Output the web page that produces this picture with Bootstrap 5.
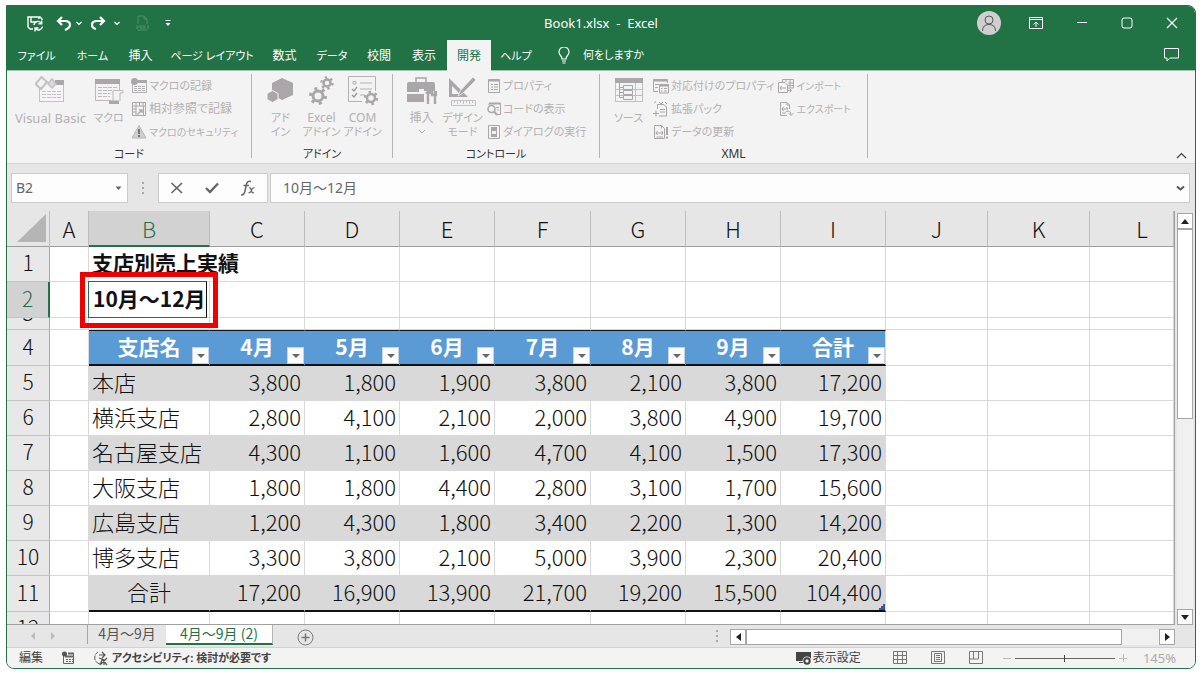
<!DOCTYPE html>
<html lang="ja">
<head>
<meta charset="utf-8">
<meta name="viewport" content="width=device-width, initial-scale=1">
<title>Book1.xlsx - Excel</title>
<link href="https://cdn.jsdelivr.net/npm/bootstrap@5.3.0/dist/css/bootstrap.min.css" rel="stylesheet">
<style>
:root{--green:#217346;--dim:#b3b0b2;--line:#d9d9d9;--chrome:#e6e6e6}
body{height:100vh;padding:5px 7px 7px 6px;background:#fff;font-family:"Noto Sans","Noto Sans CJK JP",sans-serif;font-size:12px;line-height:16px;color:#333;font-feature-settings:"palt";overflow:hidden}
svg{display:block;flex:none}
button{background:none;border:0;padding:0;color:inherit;font:inherit}
input{font:inherit;color:inherit;border:0;outline:0;background:none;min-width:0}
.app-window{height:100%;border:1px solid var(--green);border-radius:0 8px 8px 8px;background:var(--chrome);overflow:hidden}
.title-bar{height:34px;background:var(--green);color:#fff}
.title-bar .tools,.title-bar .win{flex:1 1 0}
.title-bar .win{gap:32px}
.title-text{white-space:pre;font-size:13px}
.tab-bar{height:31px;background:var(--green);color:#fff;border-bottom:1px solid #a5c3b1}
.tab-grid{display:grid;grid-template-columns:59px 53px 43px 100px 45px 50px 44px 46px 44px 50px}
.tab-grid a{color:#fff;text-decoration:none;text-align:center;line-height:31px;white-space:nowrap;height:31px}
.tab-grid a.current{background:#f3f3f3;color:var(--green)}
.avatar{width:24px;height:24px;border-radius:50%;background:#d0cfcf}
.ribbon{height:93px;background:#f3f3f3;border-bottom:1px solid #d2d2d2;color:var(--dim)}
.ribbon-group{margin:3px 0 5px;border-right:1px solid #b5b5b5;display:flex;flex-direction:column;flex:none}
.ribbon-group .tools-row{height:70px;display:flex;flex:none}
.group-name{color:#333;text-align:center;line-height:16px;margin-top:2px}
.g-code{width:245px}.g-addin{width:141px}.g-ctl{width:207px}.g-xml{width:268px}
.big{display:flex;flex-direction:column;align-items:center;width:41px;white-space:nowrap;line-height:14px;padding-top:2px}
.big svg{margin-bottom:5px}
.big.one-line{line-height:18px}
.big.wide{width:79px;font-size:13px}
.big.medium{width:37px}
.small-list{display:flex;flex-direction:column}
.small-list button{height:23px;display:flex;align-items:center;gap:2px;white-space:nowrap}
.kana{font-size:11px}
.kana-s{font-size:10px}
.formula-row{height:47px;padding:9px 5px 8px 4px}
.box{background:#fdfdfd;border:1px solid #cacaca;color:#666;height:30px}
.name-box{width:117px;font-size:14px}
.fx-box{width:110px}
.formula-box{margin-left:2px;font-size:14px}
.sheet-wrap{min-height:0;flex:1 1 0}
.grid-area{overflow:hidden;border-right:1px solid #a0a0a0;border-bottom:1px solid #a0a0a0;background:#fff;min-width:0}
.sheet{table-layout:fixed;width:100%;border-collapse:separate;border-spacing:0;font-family:"Noto Sans CJK JP",sans-serif;font-weight:300;font-size:22px;line-height:22px;color:#111;font-feature-settings:normal}
.sheet td,.sheet th{padding:0 3px 4px;border-right:1px solid var(--line);border-bottom:1px solid var(--line);height:35px;font-weight:300;white-space:nowrap;vertical-align:middle}
.sheet .tall td,.sheet .tall th{height:36px}
.sheet thead th{height:36px;text-align:center;background:var(--chrome);border-bottom:1px solid #9c9c9c;border-right:1px solid #bdbdbd;padding-bottom:2px}
.sheet thead .sel{background:#d2d2d2;color:var(--green);border-bottom:2px solid var(--green);padding-bottom:1px}
.sheet tbody th{text-align:center;background:#e8e8e8;border-right:1px solid #a8a8a8;border-bottom-color:#c4c4c4;padding:0 0 4px;font-size:21px}
.sheet tbody th.sel{background:#d2d2d2;color:var(--green);border-right:2px solid var(--green)}
.sheet .short td,.sheet .short th{height:12px;line-height:11px;padding:0}
.sheet .clip{height:11px;overflow:hidden;display:flex;justify-content:center;align-items:flex-end;line-height:22px;padding-bottom:6px}
.sheet .n{text-align:right}
.sheet .band .d{background:#d9d9d9;border-color:#d9d9d9}
.sheet .caption-row td{font-weight:700;font-size:21px;overflow:visible}
.sheet .flt td.d{background:#5b9bd5;border-right-color:#5b9bd5;border-top:1px solid #111;border-bottom:2px solid #111;color:#fff;font-weight:700;font-size:21px;text-align:center;position:relative}
.sheet .flt td.d.edge,.sheet .band td.edge{border-right-color:var(--line)}
.sheet .last td.d{border-bottom:2px solid #111;position:relative}
.flt button{position:absolute;right:0;bottom:0;width:17px;height:17px;background:#fbfbfb;border:1px solid #c9d3de;display:flex;align-items:center;justify-content:center}
.flt button::after{content:"";border:4px solid transparent;border-top-color:#666;border-bottom:0}
.handle{position:absolute;right:0;bottom:0}
.editing{position:relative}
.editing input{position:absolute;left:-1px;top:-1px;width:119px;height:37px;border:1px solid var(--green);border-right-color:#111;background:#fff;font-weight:700;font-size:21px;padding:0 0 3px 4px}
.callout-frame{position:absolute;left:-9px;top:-10px;width:138px;height:56px;border:5px solid #f00000;pointer-events:none;z-index:2}
.v-scroll{width:16px;margin:2px 2px 0 2px;background:#f0f0f0}
.sbtn{width:16px;height:16px;border:1px solid #a6a6a6;background:#fff;display:flex;align-items:center;justify-content:center;flex:none}
.v-thumb{flex:0 0 46%;border:1px solid #a6a6a6;background:#fff}
.sheet-tabs{height:22px;font-size:14px}
.sheet-tabs a{text-decoration:none;color:#555;white-space:nowrap;text-align:center;line-height:16px;font-family:"Noto Sans CJK JP",sans-serif}
.sheet-tabs a.current{background:#fff;color:var(--green);border-bottom:2px solid var(--green);border-right:1px solid #b5b5b5;width:107px;height:20px}
.sheet-tabs a.other{width:79px;border-left:1px solid #a6a6a6;height:19px}
.h-scroll{flex:0 0 445px;background:#f0f0f0;height:16px}
.h-thumb{flex:0 0 376px;border:1px solid #a6a6a6;background:#fff}
.status{height:21px;background:#f3f3f3;border-top:1px solid #d2d2d2;color:#444;padding:0 19px 0 12px}
.zoom-range{width:100px;height:14px;appearance:none;background:linear-gradient(#666,#666) center/100% 1px no-repeat}
.zoom-range::-webkit-slider-thumb{appearance:none;width:1px;height:7px;background:#444}
.zoom-text{color:#aaa;font-size:13px}
</style>
</head>
<body>
<div class="app-window d-flex flex-column">
  <header class="title-bar d-flex align-items-center flex-shrink-0">
    <div class="tools d-flex align-items-center">
      <button aria-label="保存" class="ms-3"><svg class="ms-1" width="17" height="17" viewBox="0 0 17 17" fill="none" stroke="#fff" stroke-width="1.4"><path d="M6 14H3L1 12V2H13L15 4V5M4 2V7H9M12 2V4"/><path d="M7 10A4 4 0 0 1 14.500 8.500M14.700 5.500V8.800H11.500M15.500 11.500A4 4 0 0 1 8.500 13.500M8 16.500V13H11.500"/></svg></button>
      <button aria-label="元に戻す" class="ms-2"><svg class="ms-1" width="16" height="16" viewBox="1 0 16 16" fill="none" stroke="#fff" stroke-width="2.200"><path d="M7 2L3 6L7 10M3 6H10Q15 6 15 10Q15 13 10 15"/></svg></button>
      <svg class="ms-1" width="6" height="5" viewBox="0 0 6 5" fill="none" stroke="#fff" stroke-width="1.200"><path d="M0.500 1L3 3.500L5.500 1"/></svg>
      <button aria-label="やり直し" class="ms-2"><svg width="16" height="16" viewBox="1 0 16 16" fill="none" stroke="#fff" stroke-width="2.200"><path d="M11 2L15 6L11 10M15 6H8Q3 6 3 10Q3 13 7 14"/></svg></button>
      <svg class="ms-2" width="6" height="5" viewBox="0 0 6 5" fill="none" stroke="#fff" stroke-width="1.200"><path d="M0.500 1L3 3.500L5.500 1"/></svg>
      <svg class="ms-3" width="13" height="16" viewBox="0 0 13 16" fill="none" stroke="#4d9068"><path d="M2 9V1H8L11 4V9M8 1V4H11M2 14V15H11V14M0 11H2V13H0M4 10V13H9V10M5 11H8M11 11H13V13H11"/></svg>
      <svg class="ms-3" width="6" height="6" viewBox="0 0 6 6" fill="#fff"><path d="M0.500 0H5.500V1H0.500ZM0.500 3H5.500L3 6Z"/></svg>
    </div>
    <div class="title-text">Book1.xlsx  -  Excel</div>
    <div class="win d-flex align-items-center justify-content-end">
      <button class="avatar d-flex align-items-center justify-content-center me-1" aria-label="アカウント"><svg width="16" height="17" viewBox="0 0 16 17" fill="none" stroke="#555"><circle cx="8" cy="5" r="4"/><path d="M1.500 16Q1.500 9.500 8 9.500T14.500 16"/></svg></button>
      <button aria-label="リボンの表示オプション" style="margin-left:-8px"><svg width="14" height="12" viewBox="0 0 14 12" fill="none" stroke="#fff"><path d="M0.500 0.500H13.500V11.500H0.500ZM0.500 2.500H13.500M7 10V5M4.500 7.500L7 5L9.500 7.500"/></svg></button>
      <button aria-label="最小化"><svg width="14" height="12" viewBox="0 0 14 12"><path d="M2 5.500H12" stroke="#fff"/></svg></button>
      <button aria-label="最大化"><svg width="12" height="12" viewBox="0 0 12 12"><rect x="1" y="1" width="10" height="10" rx="2" fill="none" stroke="#fff"/></svg></button>
      <button class="pe-3" aria-label="閉じる"><svg width="14" height="12" viewBox="-1 0 14 12"><path d="M1 1L11 11M11 1L1 11" stroke="#fff" stroke-width="1.200"/></svg></button>
    </div>
  </header>
  <nav class="tab-bar d-flex align-items-center flex-shrink-0">
    <div class="tab-grid"><a href="#" class="kana">ファイル</a><a href="#" class="kana">ホーム</a><a href="#">挿入</a><a href="#" class="kana">ページ レイアウト</a><a href="#">数式</a><a href="#" class="kana">データ</a><a href="#">校閲</a><a href="#">表示</a><a href="#" class="current">開発</a><a href="#" class="kana">ヘルプ</a></div>
    <button class="d-flex align-items-center gap-2 ms-3 kana"><svg width="14" height="17" viewBox="0 0 14 17" fill="none" stroke="#fff" stroke-width="1.200"><path d="M5 12Q5 10 3.500 8.500A5 5 0 1 1 10.500 8.500Q9 10 9 12ZM5 14H9M5.500 16H8.500"/></svg><span class="ms-1">何をしますか</span></button>
    <button class="ms-auto pe-3" aria-label="コメント"><svg width="15" height="14" viewBox="0 0 15 14" fill="none" stroke="#fff"><path d="M0.500 0.500H14.500V10H6L3 13V10H0.500Z"/></svg></button>
  </nav>
  <section class="ribbon d-flex flex-shrink-0">
    <div class="ribbon-group g-code">
      <div class="tools-row ps-1">
        <button class="big one-line wide"><svg width="32" height="28" viewBox="0 0 32 28" fill="none" stroke="#c5c0c4"><rect x="4.500" y="6.500" width="24" height="19" fill="#f7f5f7"/><path d="M7 15.500H26M7 18.500H26M7 21.500H26" stroke-dasharray="4 1"/><path d="M20 4H29V9H20Z" fill="#aaa6a9" stroke="none"/><path d="M6.500 1L12 6L6 13L0.500 8Z" fill="#f3f3f3" stroke-width="2"/><path d="M17 3L21 8L17 12L13 8Z" fill="#ddd9dc" stroke-width="1.500"/></svg>Visual Basic</button>
        <button class="big one-line medium"><svg width="30" height="28" viewBox="0 0 30 28" fill="none" stroke="#bdb8bc"><path d="M17 24.500H1.500V3.500H25.500V14"/><path d="M1 3H26V8H1Z" fill="#aaa6a9" stroke="none"/><path d="M4 11.500H24M4 14.500H18M4 17.500H16M4 20.500H16" stroke-dasharray="4 1"/><path d="M19 25V14.500H29V17H26V25" fill="#f3f3f3"/><path d="M15 24.500H25V28H15Z" fill="#aaa6a9" stroke="none"/></svg><span class="kana">マクロ</span></button>
        <div class="small-list ms-1">
          <button><svg width="16" height="16" viewBox="0 0 16 16" fill="none" stroke="#b5b0b4"><rect x="1.500" y="3.500" width="14" height="11"/><path d="M7 2H16V5H7Z" fill="#aaa6a9" stroke="none"/><path d="M3 8.500H14M3 10.500H14M3 12.500H14" stroke-dasharray="3 1"/><circle cx="3.500" cy="3.500" r="3.500" fill="#aaa6a9" stroke="none"/></svg><span class="kana">マクロの記録</span></button>
          <button><svg width="16" height="16" viewBox="0 0 16 16" fill="none" stroke="#aaa6a9"><path d="M1.500 1.500H14.500V14.500H1.500ZM1.500 5H14.500M5 1.500V14.500M8.500 1.500V5M12 1.500V5M1.500 8H5M1.500 11H5M12.500 5V14"/><path d="M6.500 13.500L11 9M11 12V9H8" stroke-width="1.400"/></svg>相対参照で記録</button>
          <button><svg width="16" height="16" viewBox="0 0 16 16"><path d="M8 1.500L15 14H1Z" fill="#d2cdd1" stroke="#bbb6ba"/><path d="M7 5H9V10H7ZM7 11H9V13H7Z" fill="#777"/></svg><span class="kana-s">マクロのセキュリティ</span></button>
        </div>
      </div>
      <div class="group-name kana">コード</div>
    </div>
    <div class="ribbon-group g-addin">
      <div class="tools-row ps-1">
        <button class="big ms-1"><svg width="28" height="30" viewBox="0 0 28 30"><path d="M15 2L26 7V19L15 24L5 19V7Z" fill="#aaa6a9"/><path d="M5.500 14.500L11 17.500V23.500L5.500 26.500L0 23.500V17.500Z" fill="#aaa6a9" stroke="#f3f3f3"/></svg><span class="kana">アド<br>イン</span></button>
        <button class="big"><svg width="28" height="30" viewBox="0 0 28 30" fill="none" stroke="#aaa6a9"><circle cx="10" cy="20" r="5" stroke-width="3"/><circle cx="10" cy="20" r="7.500" stroke-width="3" stroke-dasharray="3 4.850"/><circle cx="19" cy="7" r="3.500" stroke-width="2.500"/><circle cx="19" cy="7" r="5.500" stroke-width="2.500" stroke-dasharray="2.300 3.460"/></svg>Excel<br><span class="kana">アドイン</span></button>
        <button class="big"><svg width="30" height="30" viewBox="0 0 30 30" fill="none" stroke="#b5b0b4"><path d="M14 25.500H0.500V0.500H27.500V15M5 5.500H8V8H5ZM12 7H24M12 13H24M12 19H17"/><path d="M4 13L6 15L9 11M4 19L6 21L9 17" stroke="#999" stroke-width="1.300"/><circle cx="23" cy="22" r="4" stroke-width="2.500" stroke="#aaa6a9"/><circle cx="23" cy="22" r="6" stroke-width="2.500" stroke="#aaa6a9" stroke-dasharray="2.500 3.780"/></svg>COM<br><span class="kana">アドイン</span></button>
      </div>
      <div class="group-name kana">アドイン</div>
    </div>
    <div class="ribbon-group g-ctl">
      <div class="tools-row ps-1">
        <button class="big ms-1"><svg width="30" height="30" viewBox="0 0 30 30"><path d="M0 8Q0 6 2 6H26Q28 6 28 8V15H24V18H20V15H17V13H12V16H0ZM0 18H17V26H0Z" fill="#aaa6a9"/><path d="M9 6V2H19V6" fill="none" stroke="#aaa6a9" stroke-width="1.500"/><path d="M19 16L21 18V28M28 15V28M25 15V19H30V15" fill="none" stroke="#aaa6a9" stroke-width="2.400"/></svg><span>挿入</span><svg class="mt-1" width="8" height="5" viewBox="0 0 8 5" fill="none" stroke="#aaa"><path d="M1 1L4 4L7 1"/></svg></button>
        <button class="big"><svg width="30" height="30" viewBox="0 0 30 30"><path d="M1 2V21H20ZM4 10L12 18H4Z" fill="#aaa6a9" fill-rule="evenodd"/><path d="M10 20L12 15L25 1L28 4L15 17Z" fill="#aaa6a9" stroke="#f3f3f3" stroke-width=".7"/><path d="M3.500 24.500H27.500V29.500H3.500ZM6.500 25V27M9.500 25V28M12.500 25V27M15.500 25V28M18.500 25V27M21.500 25V28M24.500 25V27" fill="none" stroke="#c9bfc7"/></svg><span class="kana">デザイン<br>モード</span></button>
        <div class="small-list ms-1">
          <button><svg width="14" height="16" viewBox="0 0 14 16" fill="none" stroke="#aaa6a9"><path d="M1.500 1.500H12.500V14.500H1.500Z"/><path d="M1.500 2.500H12.500" stroke-width="2"/><path d="M4 6.500H6M7 6.500H11M4 9H6M7 9H11M4 11.500H6M7 11.500H11"/></svg><span class="kana">プロパティ</span></button>
          <button><svg width="14" height="16" viewBox="0 0 14 16" fill="none" stroke="#aaa6a9"><path d="M2 4V2.500H13.500V13.500H9"/><path d="M2 2.500H13.500" stroke-width="2"/><path d="M9 6.500H12M10 9H12"/><circle cx="4.500" cy="8" r="3.500" stroke-width="1.500"/><path d="M7 10.500L10 14" stroke-width="2"/></svg><span class="kana">コードの表示</span></button>
          <button><svg width="14" height="16" viewBox="0 0 14 16" fill="none" stroke="#aaa6a9"><path d="M1.500 1.500H12.500V14.500H1.500Z"/><path d="M4 3H10V13H4Z" fill="#aaa6a9" stroke="none"/><path d="M5 7H9V10H5Z" fill="#f3f3f3" stroke="none"/></svg><span class="kana">ダイアログの実行</span></button>
        </div>
      </div>
      <div class="group-name kana">コントロール</div>
    </div>
    <div class="ribbon-group g-xml">
      <div class="tools-row ps-1">
        <button class="big one-line ms-1"><svg width="28" height="28" viewBox="0 0 28 28" fill="none" stroke="#c5bbc2"><path d="M0.500 2.500H27.500V25.500H0.500ZM0.500 19.500H27.500M0.500 13.500H27.500M20.500 6V25"/><path d="M0 2H28V7H0Z" fill="#aaa6a9" stroke="none"/><path d="M4.500 7V21.500H8M4.500 11.500H8M4.500 16.500H8M8.500 9.500H17.500V13.500H8.500ZM8.500 14.500H17.500V18.500H8.500ZM8.500 19.500H17.500V23.500H8.500Z" stroke="#aaa6a9"/></svg><span class="kana">ソース</span></button>
        <div class="small-list ms-1">
          <button><svg width="16" height="16" viewBox="0 0 16 16" fill="none" stroke="#aaa6a9"><path d="M5 13.500H0.500V1.500H14.500V5"/><path d="M0.500 2.500H14.500" stroke-width="2"/><path d="M2 6.500H6M2 9.500H5M6.500 6.500H15.500V15H6.500ZM8 10.500H9.500M11 10.500H14M8 13H9.500M11 13H14"/><path d="M6.500 7.500H15.500" stroke-width="2"/></svg><span class="kana">対応付けのプロパティ</span></button>
          <button><svg width="16" height="16" viewBox="0 0 16 16" fill="none" stroke="#aaa6a9"><path d="M4.500 8V3.500H11L13.500 6V15H6M1 2L3 0.500M6 1L8 3L10 1M12 1L14 3M7 8.500H12M7 11H12M0 12.500H6M3 9.500V15.500"/></svg><span class="kana">拡張パック</span></button>
          <button><svg width="16" height="16" viewBox="0 0 16 16" fill="none" stroke="#aaa6a9"><path d="M1.500 1.500H8.500L11.500 4.500V14.500H1.500ZM8.500 1.500V4.500M3 9H10M4.500 7L3 9L4.500 11M8.500 7L10 9L8.500 11M3.500 13H10"/><path d="M14 3V11M14 12.500V14.500" stroke-width="2"/></svg><span class="kana">データの更新</span></button>
        </div>
        <div class="small-list ms-1">
          <button><svg width="16" height="16" viewBox="0 0 16 16" fill="none" stroke="#aaa6a9"><path d="M4.500 4V1.500H15.500V10H10M8 1.500V4M12 1.500V10M10 5H15.500M10 7.500H15.500M0.500 4.500H7L9.500 7V14.500H0.500ZM2 10H8M3.500 8L2 10L3.500 12M9 12.500H13.500M11.500 10.500L13.500 12.500L11.500 14.500"/></svg><span class="kana-s">インポート</span></button>
          <button><svg width="16" height="16" viewBox="0 0 16 16" fill="none" stroke="#aaa6a9"><path d="M9 14.500H2.500V1.500H9L11.500 4V8M9 1.500V4H11.500M4 8H10M5.500 6L4 8L5.500 10M8.500 6L10 8M4 12H8M8 10.500Q13 9 13 14M10.500 12L13 14.500L15.500 12"/></svg><span class="kana-s">エクスポート</span></button>
        </div>
      </div>
      <div class="group-name">XML</div>
    </div>
    <button class="ms-auto mt-auto me-2 mb-1" aria-label="リボンを折りたたむ"><svg width="11" height="7" viewBox="0 0 11 7" fill="none" stroke="#444" stroke-width="1.200"><path d="M1 6L5.500 1.500L10 6"/></svg></button>
  </section>
  <div class="formula-row d-flex align-items-center flex-shrink-0">
    <div class="box name-box d-flex align-items-center flex-shrink-0"><input class="flex-grow-1 w-50 ps-1" value="B2" aria-label="名前ボックス"><svg class="me-1" width="9" height="5" viewBox="0 0 9 5"><path d="M1.500 0.500H7.500L4.500 4Z" fill="#666"/></svg></div>
    <svg class="mx-2" width="14" height="16" viewBox="0 0 14 16" fill="#aaa"><path d="M6 2H8V4H6ZM6 7H8V9H6ZM6 12H8V14H6Z"/></svg>
    <div class="box fx-box d-flex align-items-center justify-content-around flex-shrink-0">
      <button aria-label="キャンセル"><svg width="14" height="12" viewBox="0 0 14 12"><path d="M1.500 1L12 11M12 1L1.500 11" stroke="#666" stroke-width="1.700"/></svg></button>
      <button aria-label="入力"><svg width="14" height="12" viewBox="0 0 14 12"><path d="M1 6L5 10L13 1.500" fill="none" stroke="#666" stroke-width="2.400"/></svg></button>
      <button aria-label="関数の挿入"><svg width="16" height="16" viewBox="0 0 16 16" fill="none" stroke="#666"><path d="M1 15Q4 15.500 5 11L6.500 4Q7.500 0.500 11 1.500M3.500 5.500H9" stroke-width="1.500"/><path d="M9 8Q11 7 11.500 11Q12 13.500 14 12.500M14.500 8Q13 7 11.500 10.500Q10 13.500 8.500 12.500" stroke-width="1.200"/></svg></button>
    </div>
    <div class="box formula-box d-flex align-items-center flex-grow-1"><input class="flex-grow-1 ps-2 ms-1" value="10月～12月" aria-label="数式バー"><svg class="me-1" width="9" height="7" viewBox="0 0 9 7" fill="none" stroke="#555" stroke-width="2"><path d="M1 1.500L4.500 4.500L8 1.500"/></svg></div>
  </div>
  <main class="sheet-wrap d-flex">
    <div class="grid-area flex-grow-1">
      <table class="sheet">
        <colgroup><col style="width:43px"><col style="width:39px"><col style="width:121px"><col style="width:95px"><col style="width:95px"><col style="width:95px"><col style="width:96px"><col style="width:95px"><col style="width:95px"><col style="width:105px"><col style="width:102px"><col style="width:102px"><col></colgroup>
        <thead><tr><th aria-label="すべて選択"><svg class="ms-auto" width="30" height="30" viewBox="0 0 30 30"><path d="M30 1V29H1Z" fill="#b5b5b5"/></svg></th><th>A</th><th class="sel">B</th><th>C</th><th>D</th><th>E</th><th>F</th><th>G</th><th>H</th><th>I</th><th>J</th><th>K</th><th class="ps-4">L</th></tr></thead>
        <tbody>
        <tr class="caption-row"><th>1</th><td></td><td class="border-end-0">支店別売上実績</td><td></td><td></td><td></td><td></td><td></td><td></td><td></td><td></td><td></td><td></td></tr>
        <tr class="tall"><th class="sel">2</th><td></td><td class="editing"><input value="10月～12月" aria-label="セル B2"><span class="callout-frame"></span></td><td></td><td></td><td></td><td></td><td></td><td></td><td></td><td></td><td></td><td></td></tr>
        <tr class="short"><th><div class="clip">3</div></th><td></td><td></td><td></td><td></td><td></td><td></td><td></td><td></td><td></td><td></td><td></td><td></td></tr>
        <tr class="flt tall"><th>4</th><td></td><td class="d">支店名<button aria-label="支店名で絞り込み"></button></td><td class="d">4月<button aria-label="4月で絞り込み"></button></td><td class="d">5月<button aria-label="5月で絞り込み"></button></td><td class="d">6月<button aria-label="6月で絞り込み"></button></td><td class="d">7月<button aria-label="7月で絞り込み"></button></td><td class="d">8月<button aria-label="8月で絞り込み"></button></td><td class="d">9月<button aria-label="9月で絞り込み"></button></td><td class="d edge">合計<button aria-label="合計で絞り込み"></button></td><td></td><td></td><td></td></tr>
        <tr class="band"><th>5</th><td></td><td class="d">本店</td><td class="d n">3,800</td><td class="d n">1,800</td><td class="d n">1,900</td><td class="d n">3,800</td><td class="d n">2,100</td><td class="d n">3,800</td><td class="d n edge">17,200</td><td></td><td></td><td></td></tr>
        <tr><th>6</th><td></td><td>横浜支店</td><td class="n">2,800</td><td class="n">4,100</td><td class="n">2,100</td><td class="n">2,000</td><td class="n">3,800</td><td class="n">4,900</td><td class="n">19,700</td><td></td><td></td><td></td></tr>
        <tr class="band"><th>7</th><td></td><td class="d">名古屋支店</td><td class="d n">4,300</td><td class="d n">1,100</td><td class="d n">1,600</td><td class="d n">4,700</td><td class="d n">4,100</td><td class="d n">1,500</td><td class="d n edge">17,300</td><td></td><td></td><td></td></tr>
        <tr><th>8</th><td></td><td>大阪支店</td><td class="n">1,800</td><td class="n">1,800</td><td class="n">4,400</td><td class="n">2,800</td><td class="n">3,100</td><td class="n">1,700</td><td class="n">15,600</td><td></td><td></td><td></td></tr>
        <tr class="band"><th>9</th><td></td><td class="d">広島支店</td><td class="d n">1,200</td><td class="d n">4,300</td><td class="d n">1,800</td><td class="d n">3,400</td><td class="d n">2,200</td><td class="d n">1,300</td><td class="d n edge">14,200</td><td></td><td></td><td></td></tr>
        <tr><th>10</th><td></td><td>博多支店</td><td class="n">3,300</td><td class="n">3,800</td><td class="n">2,100</td><td class="n">5,000</td><td class="n">3,900</td><td class="n">2,300</td><td class="n">20,400</td><td></td><td></td><td></td></tr>
        <tr class="band last tall"><th>11</th><td></td><td class="d text-center">合計</td><td class="d n">17,200</td><td class="d n">16,900</td><td class="d n">13,900</td><td class="d n">21,700</td><td class="d n">19,200</td><td class="d n">15,500</td><td class="d n edge">104,400<svg class="handle" width="6" height="6"><path d="M4 0H6V6H0V4H2V2H4Z" fill="#3f51a3"/></svg></td><td></td><td></td><td></td></tr>
        <tr><th>12</th><td></td><td></td><td></td><td></td><td></td><td></td><td></td><td></td><td></td><td></td><td></td><td></td></tr>
        </tbody>
      </table>
    </div>
    <div class="v-scroll d-flex flex-column">
      <button class="sbtn" aria-label="上へ"><svg width="8" height="5"><path d="M0 5L4 0L8 5Z" fill="#222"/></svg></button>
      <div class="v-thumb"></div>
      <button class="sbtn mt-auto" aria-label="下へ"><svg width="8" height="5"><path d="M0 0L4 5L8 0Z" fill="#222"/></svg></button>
    </div>
  </main>
  <div class="sheet-tabs d-flex align-items-start flex-shrink-0">
    <svg class="ms-4 mt-1 me-4" width="32" height="14" viewBox="0 0 32 14" fill="#bbb"><path d="M4 3V11L0 7ZM20 3V11L24 7Z" /></svg>
    <a href="#" class="other">4月～9月</a><a href="#" class="current">4月～9月 (2)</a>
    <button class="ms-4 mt-1" aria-label="新しいシート"><svg width="17" height="17" viewBox="0 0 17 17" fill="none" stroke="#777"><circle cx="8.500" cy="8.500" r="7.500"/><path d="M8.500 4.500V12.500M4.500 8.500H12.500" stroke-width="1.500"/></svg></button>
    <svg class="ms-auto mt-1 me-2" width="6" height="14" viewBox="-3 0 6 14" fill="#aaa"><path d="M1 1H3V3H1ZM1 6H3V8H1ZM1 11H3V13H1Z"/></svg>
    <div class="h-scroll d-flex mt-1 me-3 ms-1">
      <button class="sbtn" aria-label="左へ"><svg width="5" height="8"><path d="M5 0L0 4L5 8Z" fill="#222"/></svg></button>
      <div class="h-thumb"></div>
      <button class="sbtn ms-auto" aria-label="右へ"><svg width="5" height="8"><path d="M0 0L5 4L0 8Z" fill="#222"/></svg></button>
    </div>
    <span class="pe-1"></span>
  </div>
  <footer class="status d-flex align-items-center flex-shrink-0">
    <span>編集</span>
    <svg class="ms-3 me-3" width="17" height="14" viewBox="-3 0 17 14" fill="none" stroke="#666"><path d="M1.500 4V12.500H11.500V2.500H6"/><path d="M6 2.500H12M3 5.500H11" stroke-width="2"/><path d="M4 8.500H11M4 10.500H11" stroke-dasharray="2 1"/><circle cx="2.500" cy="3" r="2.500" fill="#555" stroke="none"/></svg>
    <button class="d-flex align-items-center gap-1 fw-bold kana"><svg width="16" height="16" viewBox="1 0 16 16" fill="none" stroke="#555"><path d="M9 14A6.500 6.500 0 0 1 7 2" stroke-dasharray="5 1"/><path d="M8 5H14M11 2L14 5L11 8M8 8L13 10V15M11 10L9 15M16 8L10 14M11 9L16 15" stroke-width="1.200"/></svg>アクセシビリティ: 検討が必要です</button>
    <button class="ms-auto d-flex align-items-center"><svg width="17" height="15" viewBox="0 0 17 15"><path d="M0 1H15V10H0ZM3 11H8V12H3Z" fill="#444"/><circle cx="11" cy="10" r="4.500" fill="#f3f3f3"/><circle cx="11" cy="10" r="2.700" fill="none" stroke="#444" stroke-width="2"/></svg><span>表示設定</span></button>
    <button class="ms-4 ps-2" aria-label="標準"><svg width="14" height="14" viewBox="0 0 14 14" fill="none" stroke="#777"><path d="M0.500 0.500H13.500V12.500H0.500ZM0.500 4.500H13.500M0.500 8.500H13.500M4.500 0.500V12.500M9.500 0.500V12.500"/></svg></button>
    <button class="ms-4" aria-label="ページ レイアウト"><svg width="14" height="14" viewBox="0 0 14 14" fill="none" stroke="#777"><path d="M0.500 0.500H13.500V12.500H0.500ZM3.500 2.500H10.500V10.500H3.500ZM5 4.500H9M5 6.500H9M5 8.500H9"/></svg></button>
    <button class="ms-4 me-3" aria-label="改ページ プレビュー"><svg width="14" height="14" viewBox="0 0 14 14" fill="none" stroke="#777"><path d="M0.500 0.500H13.500V12.500H0.500ZM4.500 0.500V8M9.500 0.500V8M0.500 8H9.500"/></svg></button>
    <button class="ms-1 me-1" aria-label="縮小"><svg width="8" height="8"><path d="M0 4.500H8" stroke="#bbb"/></svg></button>
    <input type="range" class="zoom-range" min="0" max="100" value="50" aria-label="ズーム">
    <button class="ms-1 me-3" aria-label="拡大"><svg width="8" height="8"><path d="M0 4.500H8M4.500 0V8" stroke="#bbb"/></svg></button>
    <span class="zoom-text">145%</span>
  </footer>
</div>
<script src="https://cdn.jsdelivr.net/npm/bootstrap@5.3.0/dist/js/bootstrap.bundle.min.js"></script>
</body>
</html>
